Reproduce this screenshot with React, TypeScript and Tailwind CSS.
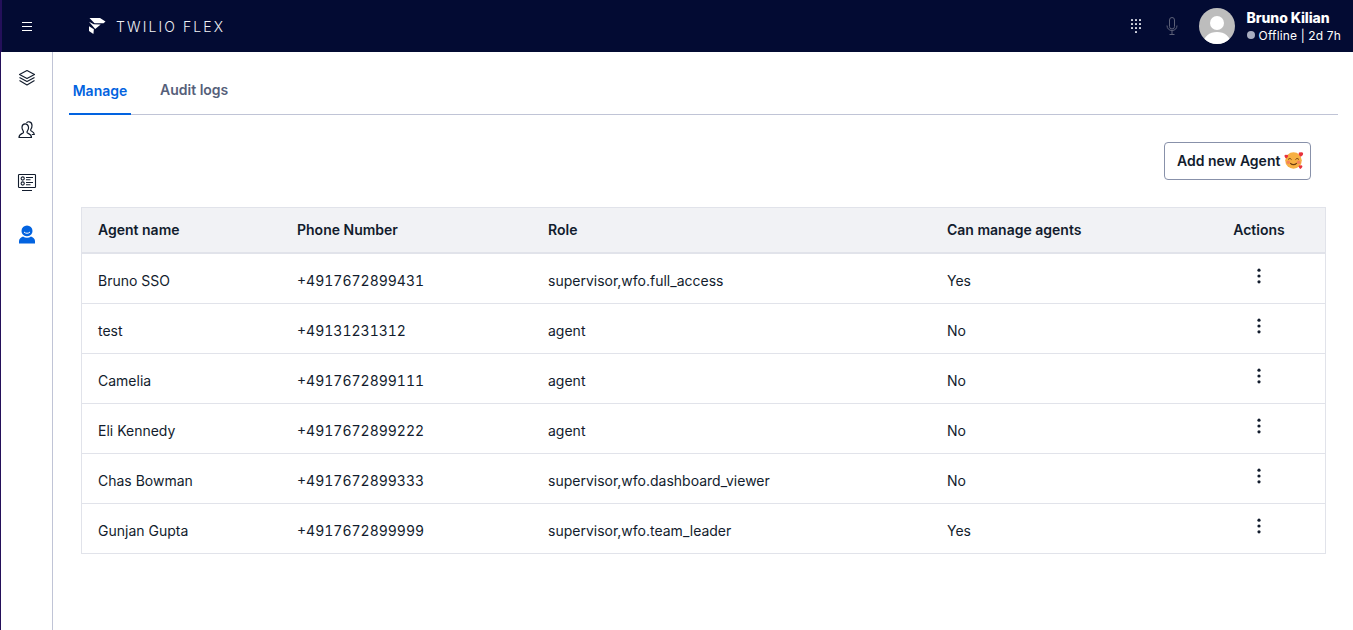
import React from "react";

const rows = [
  ["Bruno SSO", "+4917672899431", "supervisor,wfo.full_access", "Yes"],
  ["test", "+49131231312", "agent", "No"],
  ["Camelia", "+4917672899111", "agent", "No"],
  ["Eli Kennedy", "+4917672899222", "agent", "No"],
  ["Chas Bowman", "+4917672899333", "supervisor,wfo.dashboard_viewer", "No"],
  ["Gunjan Gupta", "+4917672899999", "supervisor,wfo.team_leader", "Yes"],
];

function Dots() {
  return (
    <svg width="4" height="16" viewBox="0 0 4 16" className="mx-auto block" fill="#121c2d">
      <circle cx="2" cy="2.200" r="1.600" />
      <circle cx="2" cy="8" r="1.600" />
      <circle cx="2" cy="13.800" r="1.600" />
    </svg>
  );
}

function Emoji() {
  return (
    <svg width="20" height="20" viewBox="0 0 20 20" className="ml-[4px] shrink-0">
      <circle cx="9.500" cy="10.500" r="8.300" fill="#f7b043" />
      <path d="M4.300 9.300c.8-1.100 2.200-1.100 3 0M11.700 9.300c.8-1.100 2.200-1.100 3 0" stroke="#6e3d10" strokeWidth="1" fill="none" strokeLinecap="round" />
      <path d="M6.500 13.300c1.500 1.800 4.500 1.800 6 0" stroke="#6e3d10" strokeWidth="1.100" fill="none" strokeLinecap="round" />
      <circle cx="4.300" cy="12.300" r="1.800" fill="#f27a5e" opacity="0.85" />
      <circle cx="14.700" cy="12.300" r="1.800" fill="#f27a5e" opacity="0.85" />
      <path d="M14.800 4.300c-.6-1.700 1.100-2.800 2.100-1.700 1-.9 2.700.2 2.100 1.800-.4 1.100-1.400 1.700-2.200 2.300-.9-.5-1.700-1.300-2-2.400z" fill="#e8323c" />
      <path d="M.6 6.500c-.5-1.400.9-2.300 1.700-1.400.9-.8 2.300.1 1.800 1.500-.4.900-1.100 1.400-1.800 1.900-.8-.5-1.500-1.100-1.700-2z" fill="#e8323c" />
      <path d="M14.800 17c-.5-1.400.9-2.300 1.700-1.400.9-.8 2.300.1 1.800 1.500-.4.900-1.100 1.400-1.800 1.900-.8-.5-1.500-1.100-1.700-2z" fill="#e8323c" />
    </svg>
  );
}

function Logo() {
  return (
    <svg width="17" height="16" viewBox="0 0 17 16" fill="#fff">
      <path d="M.5 0h10.500L16.500 3.600 14.500 5.300 5.500 5.300z" />
      <path d="M0 3.800l4.700 2.400 7 .2-5.500 4.600z" />
      <path d="M0 8.200l4.900 3-.5 4.800L0 13z" />
    </svg>
  );
}

function Avatar() {
  return (
    <svg width="36" height="36" viewBox="0 0 36 36">
      <defs>
        <clipPath id="av">
          <circle cx="18" cy="18" r="18" />
        </clipPath>
      </defs>
      <circle cx="18" cy="18" r="18" fill="#bdbdbd" />
      <g clipPath="url(#av)" fill="#fff">
        <circle cx="18" cy="15" r="7" />
        <path d="M4 37c0-8 6-13 14-13s14 5 14 13z" />
      </g>
    </svg>
  );
}

export default function App() {
  return (
    <div className="flex h-[630px] w-[1353px] flex-col overflow-hidden bg-white font-['Inter',sans-serif] text-[#121c2d]">
      <header className="flex h-[52px] shrink-0 items-center border-l-2 border-[#24105a] bg-[#030b33] text-white">
        <svg width="10" height="9" viewBox="0 0 10 9" className="ml-[20px]" stroke="#fff" strokeWidth="1">
          <path d="M0 .5h10M0 4.500h10M0 8.500h10" />
        </svg>
        <div className="ml-[57px] flex items-center">
          <Logo />
          <span className="ml-[10px] text-[14px] font-light tracking-[0.15em] text-[#f0f1f5]">TWILIO FLEX</span>
        </div>
        <div className="ml-auto flex items-center">
          <svg width="10" height="14" viewBox="0 0 10 14" fill="#d4d7e2">
            {[0, 1, 2].map((r) =>
              [0, 1, 2].map((c) => <rect key={`${r}-${c}`} x={c * 4} y={r * 4} width="2" height="2" rx="0.6" />)
            )}
            <rect x="4" y="12" width="2" height="2" rx="0.6" />
          </svg>
          <svg width="12" height="18" viewBox="0 0 12 18" fill="none" stroke="#5d6178" strokeWidth="1" className="ml-[25px]">
            <rect x="3.500" y="0.500" width="5" height="11.500" rx="2.500" />
            <path d="M1 8.500c0 3 2 5 5 5s5-2 5-5M6 13.500v4M3.500 17.500h5" />
          </svg>
          <div className="ml-[21px]">
            <Avatar />
          </div>
          <div className="ml-[12px] mr-[12px] flex flex-col">
            <span className="text-[14px] font-extrabold leading-[18px] tracking-[-0.1px]">Bruno Kilian</span>
            <span className="flex items-center text-[12px] leading-[17px] tracking-[0.15px]">
              <span className="mr-[4px] h-[8px] w-[8px] rounded-full bg-[#a9aec0]" />
              Offline | 2d 7h
            </span>
          </div>
        </div>
      </header>
      <div className="flex min-h-0 flex-1">
        <aside className="flex w-[53px] shrink-0 flex-col items-center border-l border-r border-l-[#24105a] border-r-[#c0c4d6] pt-[16px]">
          <svg width="20" height="20" viewBox="0 0 20 20" fill="none" stroke="#121c2d" strokeWidth="1.100" strokeLinejoin="round">
            <path d="M10 2.500l7.500 4-7.500 4-7.500-4z" />
            <path d="M2.500 9.500l7.500 4 7.500-4" />
            <path d="M2.500 12.500l7.500 4.500 7.500-4.500" />
          </svg>
          <svg width="20" height="20" viewBox="0 0 20 20" fill="none" stroke="#121c2d" strokeWidth="1.200" strokeLinejoin="round" className="mt-[32px]">
            <path d="M2 17.500h12.500c0-3-2-3.500-4-4.500-.7-.4-.6-1.500 0-2.200 1-1.200 1.200-2.500 1-3.800C11 4.500 9.500 3.800 8.200 3.800S5.200 4.800 5 7c-.1 1.300.2 2.600 1.100 3.800.5.700.6 1.800-.1 2.200-2 1-4 1.500-4 4.500z" />
            <path d="M9.500 2.800c.7-.8 1.700-1.200 2.800-1 1.600.3 2.700 1.500 2.700 3.700 0 1.300-.3 2.500-1 3.500-.5.700-.4 1.600.3 2 1.400.7 3 1.200 3 3.500h-2.500" />
          </svg>
          <svg width="20" height="20" viewBox="0 0 20 20" fill="none" stroke="#121c2d" strokeWidth="1.100" className="mt-[32px]">
            <rect x="1.500" y="2.500" width="17" height="13" rx="0.800" />
            <circle cx="5.700" cy="6.500" r="1.600" />
            <circle cx="5.700" cy="11.500" r="1.600" />
            <path d="M9 5.500h7M9 7.700h4.500M9 10.500h7M9 12.700h4.500M5 18.500h10" />
          </svg>
          <svg width="20" height="20" viewBox="0 0 20 20" fill="#0263e0" className="mt-[32px]">
            <path d="M10 1.500a5.500 5.500 0 0 1 5.500 5.500c0 1.200-.4 2.400-1.100 3.300-1 1.300-2.700 2-4.400 2s-3.400-.7-4.400-2A5.400 5.400 0 0 1 4.500 7 5.500 5.500 0 0 1 10 1.500z" />
            <path d="M6 12.500c1.200.8 2.600 1.200 4 1.200s2.800-.4 4-1.200c2 .7 4 2.200 4 4.500v2.500H2V17c0-2.300 2-3.800 4-4.500z" />
            <path d="M7 8c1.500 1.700 4.500 1.700 6 0" stroke="#fff" strokeWidth="1" fill="none" />
          </svg>
        </aside>
        <main className="flex min-w-0 flex-1 flex-col pl-[16px] pr-[15px]">
          <div className="flex h-[63px] shrink-0 items-end border-b border-[#c0c4d6]">
            <div className="mb-[-1px] flex h-[42px] w-[62px] items-start justify-center border-b-2 border-[#0263e0] pt-[8px] text-[14px] font-semibold leading-[20px] text-[#0263e0]">
              Manage
            </div>
            <div className="ml-[29px] flex h-[42px] items-start pt-[8px] text-[14px] font-semibold leading-[20px] text-[#565f7a]">
              Audit logs
            </div>
          </div>
          <div className="mr-[27px] mt-[27px] flex justify-end">
            <button className="flex h-[38px] w-[147px] items-center justify-start rounded-[4px] border border-[#8891aa] bg-white pb-[2px] pl-[12px] text-[14px] font-semibold text-[#121c2d]">
              Add new Agent
              <Emoji />
            </button>
          </div>
          <div className="ml-[12px] mt-[27px] w-[1245px] border border-[#e1e3ea]">
            <table className="w-full table-fixed border-collapse text-[14px]">
              <colgroup>
                <col className="w-[199px]" />
                <col className="w-[251px]" />
                <col className="w-[399px]" />
                <col className="w-[262px]" />
                <col className="w-[132px]" />
              </colgroup>
              <thead>
                <tr className="h-[45px] border-b-2 border-[#e1e3ea] bg-[#f1f2f5] font-semibold">
                  <th className="px-[16px] pb-[2px] text-left font-semibold">Agent name</th>
                  <th className="px-[16px] pb-[2px] text-left font-semibold">Phone Number</th>
                  <th className="px-[16px] pb-[2px] text-left font-semibold">Role</th>
                  <th className="px-[16px] pb-[2px] text-left font-semibold">Can manage agents</th>
                  <th className="px-[16px] pb-[2px] text-center font-semibold">Actions</th>
                </tr>
              </thead>
              <tbody>
                {rows.map((r, i) => (
                  <tr key={i} className={`h-[50px] ${i < rows.length - 1 ? "border-b border-[#e1e3ea]" : ""}`}>
                    <td className="px-[16px] pt-[4px]">{r[0]}</td>
                    <td className="px-[16px] pt-[4px] tabular-nums">{r[1]}</td>
                    <td className="px-[16px] pt-[4px]">{r[2]}</td>
                    <td className="px-[16px] pt-[4px]">{r[3]}</td>
                    <td className="px-[16px] pb-[4px]">
                      <Dots />
                    </td>
                  </tr>
                ))}
              </tbody>
            </table>
          </div>
        </main>
      </div>
    </div>
  );
}
